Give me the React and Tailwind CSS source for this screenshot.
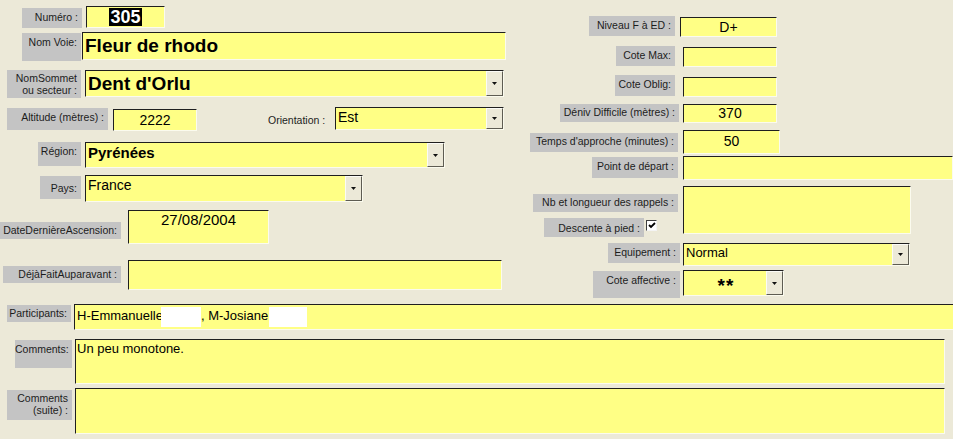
import React from "react";

const labelBase =
    "shrink-0 whitespace-nowrap bg-[#c4c4c4] text-[10.5px] leading-[13px] text-[#1c1c1c] text-right pr-[4px] pt-[3px]";

const fieldBase =
    "shrink-0 overflow-hidden bg-[#ffff85] text-black border border-t-[#1f1f1f] border-l-[#1f1f1f] border-r-[#fbfbee] border-b-[#fbfbee]";

function Label({ className = "", children }) {
    return <div className={`${labelBase} ${className}`}>{children}</div>;
}

function Field({ className = "", children }) {
    return <div className={`${fieldBase} ${className}`}>{children}</div>;
}

function DropButton() {
    return (
        <div className="flex h-full w-[17px] shrink-0 items-center justify-center border border-t-[#fbfbf6] border-l-[#fbfbf6] border-r-[#5e5c52] border-b-[#5e5c52] bg-[#ece9d8]">
            <svg width="5" height="3" viewBox="0 0 5 3">
                <path d="M0 0h5L2.5 3z" fill="#111" />
            </svg>
        </div>
    );
}

function Combo({ className = "", textClass = "", children }) {
    return (
        <div className={`${fieldBase} flex ${className}`}>
            <div className={`min-w-0 flex-1 pl-[2px] ${textClass}`}>
                {children}
            </div>

            <DropButton />
        </div>
    );
}

function Row({ className = "", children }) {
    return (
        <div className={`flex shrink-0 items-start ${className}`}>
            {children}
        </div>
    );
}

function App() {
    return (
        <div className="h-[439px] w-[953px] overflow-hidden bg-[#ece9d8] font-['Liberation_Sans',Arial,sans-serif]">
            <div className="flex h-[304px]">
                {/* colonne gauche */}
                <div className="flex w-[520px] shrink-0 flex-col pt-[6px]">
                    <Row className="h-[26px]">
                        <Label className="ml-[22px] mt-[2px] h-[20px] w-[60px]">
                            Numéro :
                        </Label>

                        <Field className="ml-[4px] flex h-[22px] w-[79px] items-center justify-center">
                            <span className="bg-black px-[1px] text-[18px] font-bold leading-[18px] text-white">
                                305
                            </span>
                        </Field>
                    </Row>

                    <Row className="h-[38px]">
                        <Label className="ml-[22px] mt-[1px] h-[28px] w-[59px]">
                            Nom Voie:
                        </Label>

                        <Field className="ml-[1px] h-[28px] w-[424px] pl-[2px] text-[19px] font-bold leading-[26px]">
                            Fleur de rhodo
                        </Field>
                    </Row>

                    <Row className="h-[37px]">
                        <Label className="ml-[7px] h-[28px] w-[74px] !pt-[2px] !leading-[12px]">
                            NomSommet
                            <br />
                            ou secteur :
                        </Label>

                        <Combo
                            className="ml-[4px] h-[27px] w-[419px]"
                            textClass="text-[19px] font-bold leading-[25px]"
                        >
                            Dent d'Orlu
                        </Combo>
                    </Row>

                    <Row className="h-[35px]">
                        <Label className="ml-[7px] mt-[1px] h-[22px] w-[101px]">
                            Altitude (mètres) :
                        </Label>

                        <Field className="ml-[5px] mt-[2px] h-[22px] w-[84px] text-center text-[14px] leading-[20px]">
                            2222
                        </Field>

                        <span className="ml-[71px] mt-[7px] w-[64px] shrink-0 whitespace-nowrap text-[10.5px] leading-[13px] text-[#1c1c1c]">
                            Orientation :
                        </span>

                        <Combo
                            className="ml-[3px] h-[23px] w-[169px]"
                            textClass="text-[14px] leading-[19px]"
                        >
                            Est
                        </Combo>
                    </Row>

                    <Row className="h-[33px]">
                        <Label className="ml-[38px] h-[24px] w-[43px]">
                            Région:
                        </Label>

                        <Combo
                            className="ml-[4px] h-[26px] w-[360px]"
                            textClass="text-[15px] font-bold leading-[20px]"
                        >
                            Pyrénées
                        </Combo>
                    </Row>

                    <Row className="h-[35px]">
                        <Label className="ml-[40px] mt-[1px] h-[23px] w-[41px] !pt-[6px]">
                            Pays:
                        </Label>

                        <Combo
                            className="ml-[4px] h-[27px] w-[278px]"
                            textClass="text-[14px] leading-[18px]"
                        >
                            France
                        </Combo>
                    </Row>

                    <Row className="h-[50px]">
                        <Label className="mt-[12px] h-[17px] w-[121px] !pt-[2px]">
                            DateDernièreAscension:
                        </Label>

                        <Field className="ml-[7px] h-[34px] w-[141px] text-center text-[15px] leading-[18px]">
                            27/08/2004
                        </Field>
                    </Row>

                    <Row className="h-[44px]">
                        <Label className="ml-[3px] mt-[6px] h-[17px] w-[118px] !pt-[2px]">
                            DéjàFaitAuparavant :
                        </Label>

                        <Field className="ml-[7px] h-[30px] w-[374px]" />
                    </Row>
                </div>

                {/* colonne droite */}
                <div className="flex flex-1 flex-col pt-[16px]">
                    <Row className="h-[30px]">
                        <Label className="ml-[69px] h-[20px] w-[86px]">
                            Niveau F à ED :
                        </Label>

                        <Field className="ml-[5px] mt-[1px] h-[20px] w-[97px] text-center text-[14px] leading-[18px]">
                            D+
                        </Field>
                    </Row>

                    <Row className="h-[29px]">
                        <Label className="ml-[96px] h-[20px] w-[59px]">
                            Cote Max:
                        </Label>

                        <Field className="ml-[8px] mt-[1px] h-[20px] w-[94px]" />
                    </Row>

                    <Row className="h-[29px]">
                        <Label className="ml-[95px] h-[21px] w-[60px]">
                            Cote Oblig:
                        </Label>

                        <Field className="ml-[8px] mt-[2px] h-[20px] w-[94px]" />
                    </Row>

                    <Row className="h-[26px]">
                        <Label className="ml-[40px] h-[18px] w-[119px] !pt-[2px]">
                            Déniv Difficile (mètres) :
                        </Label>

                        <Field className="ml-[4px] h-[19px] w-[94px] text-center text-[14px] leading-[17px]">
                            370
                        </Field>
                    </Row>

                    <Row className="h-[26px]">
                        <Label className="ml-[10px] mt-[3px] h-[19px] w-[148px] !pt-[2px]">
                            Temps d'approche (minutes) :
                        </Label>

                        <Field className="ml-[5px] h-[24px] w-[97px] text-center text-[14px] leading-[20px]">
                            50
                        </Field>
                    </Row>

                    <Row className="h-[30px]">
                        <Label className="ml-[72px] mt-[1px] h-[21px] w-[86px]">
                            Point de départ :
                        </Label>

                        <Field className="ml-[5px] h-[24px] w-[270px]" />
                    </Row>

                    <Row className="h-[57px]">
                        <div className="flex w-[163px] shrink-0 flex-col">
                            <Label className="ml-[13px] mt-[8px] h-[18px] w-[145px] !pt-[2px]">
                                Nb et longueur des rappels :
                            </Label>

                            <div className="mt-[6px] flex items-start">
                                <Label className="ml-[24px] h-[19px] w-[100px] !pt-[4px]">
                                    Descente à pied :
                                </Label>

                                <div className="ml-[2px] mt-[2px] flex h-[11px] w-[11px] items-center justify-center border border-t-[#3c3c3c] border-l-[#3c3c3c] border-r-[#f4f4f4] border-b-[#f4f4f4] bg-white">
                                    <svg width="8" height="7" viewBox="0 0 8 7">
                                        <path
                                            d="M1 3l2 2 4-4"
                                            fill="none"
                                            stroke="#000"
                                            strokeWidth="1.8"
                                        />
                                    </svg>
                                </div>
                            </div>
                        </div>

                        <Field className="h-[48px] w-[228px]" />
                    </Row>

                    <Row className="h-[27px]">
                        <Label className="ml-[88px] h-[20px] w-[72px]">
                            Equipement :
                        </Label>

                        <Combo
                            className="ml-[3px] h-[23px] w-[227px]"
                            textClass="text-[13px] leading-[18px]"
                        >
                            Normal
                        </Combo>
                    </Row>

                    <Row className="h-[34px]">
                        <Label className="ml-[73px] mt-[1px] h-[27px] w-[87px]">
                            Cote affective :
                        </Label>

                        <Combo
                            className="ml-[3px] h-[26px] w-[101px]"
                            textClass="text-center text-[19px] font-bold leading-[30px] tracking-[1px]"
                        >
                            **
                        </Combo>
                    </Row>
                </div>
            </div>

            {/* bas du formulaire */}
            <Row className="h-[35px]">
                <Label className="ml-[7px] mt-[1px] h-[17px] w-[64px] !pt-[2px]">
                    Participants:
                </Label>

                <Field className="ml-[3px] flex h-[26px] w-[880px] items-start pl-[2px] pt-[2px] text-[13px] leading-[18px]">
                    <span>H-Emmanuelle</span>
                    <span className="-ml-[2px] h-[20px] w-[40px] bg-white" />
                    <span>, M-Josiane</span>
                    <span className="ml-[1px] h-[20px] w-[38px] bg-white" />
                </Field>
            </Row>

            <Row className="h-[49px]">
                <Label className="ml-[15px] mt-[1px] h-[28px] w-[57px]">
                    Comments:
                </Label>

                <Field className="ml-[3px] h-[45px] w-[870px] pl-[1px] text-[13px] leading-[18px]">
                    Un peu monotone.
                </Field>
            </Row>

            <Row className="h-[51px]">
                <Label className="ml-[7px] mt-[2px] h-[30px] w-[65px] !pt-[2px] !leading-[12px]">
                    Comments
                    <br />
                    (suite) :
                </Label>

                <Field className="ml-[3px] h-[46px] w-[870px]" />
            </Row>
        </div>
    );
}

export default App;
